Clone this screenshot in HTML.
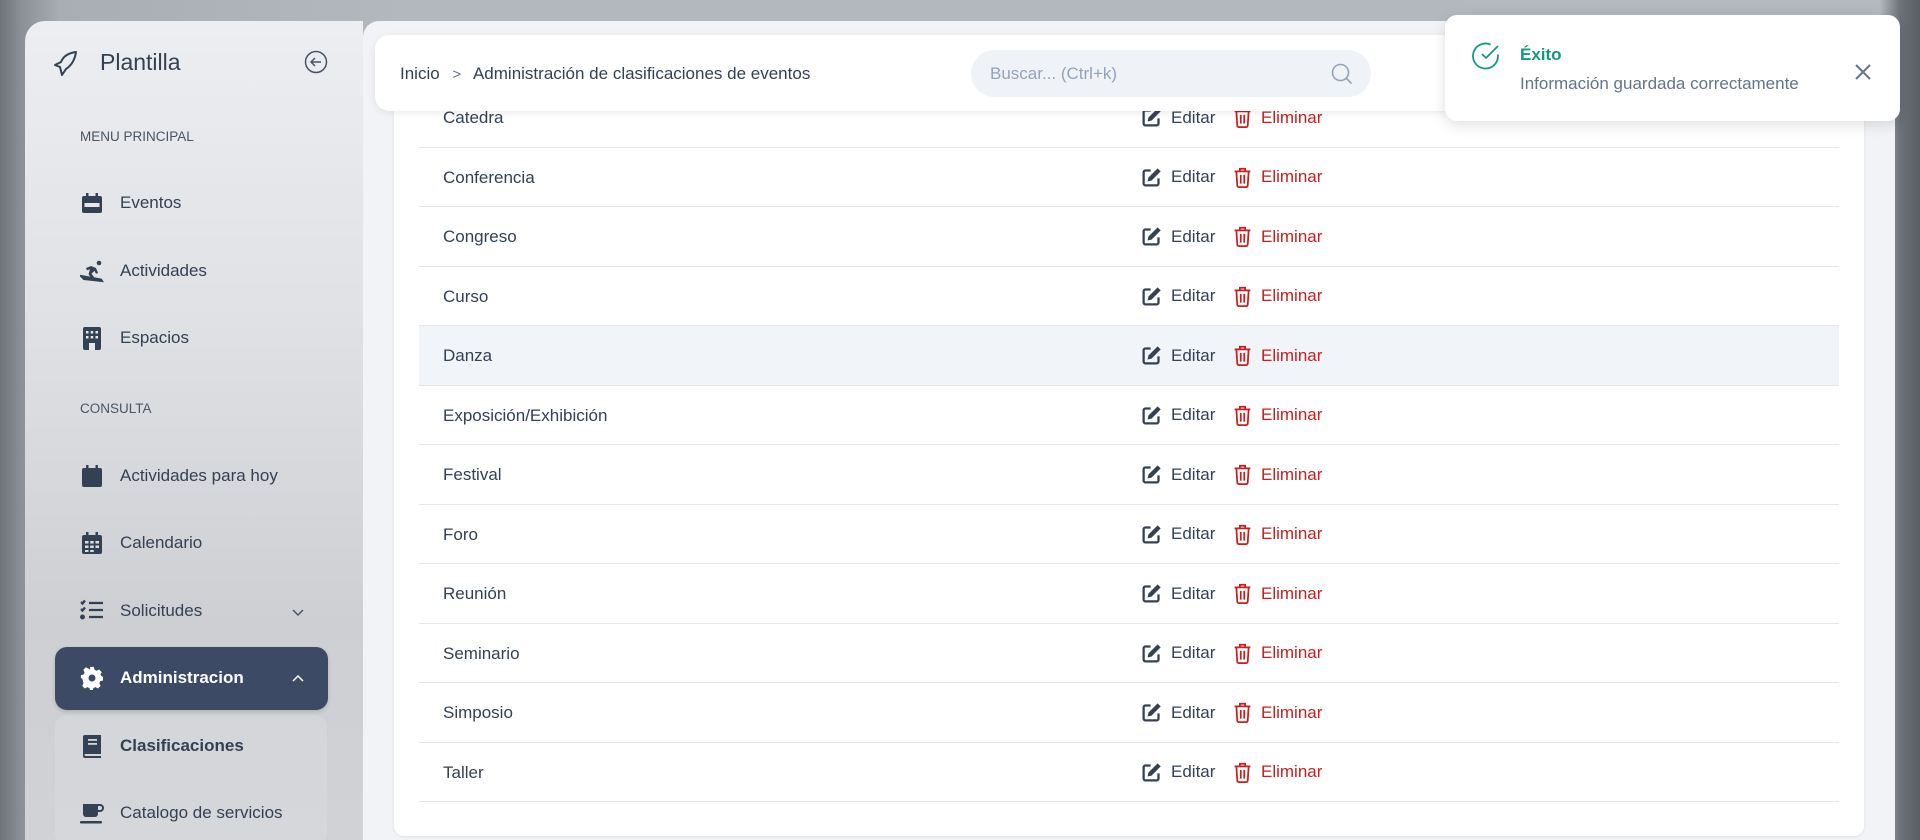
<!DOCTYPE html>
<html><head><meta charset="utf-8"><style>
*{box-sizing:border-box;margin:0;padding:0}
html{width:1920px;height:840px;overflow:hidden}
body{width:1920px;height:840px;overflow:hidden;font-family:"Liberation Sans",sans-serif;position:relative;
background:linear-gradient(90deg,#6f737a 0,#8a8e95 20px,#a9adb4 60px,#b3b7be 400px,#b3b7be 1880px,#6d7178 1900px,#5a5e65 1920px);}
.side{position:absolute;left:25px;top:21px;width:338px;height:819px;border-radius:20px 0 0 0;
background:linear-gradient(180deg,#eceef1 0,#dfe1e5 300px,#cdcfd3 600px,#d0d2d6 819px);}
.main{position:absolute;left:363px;top:21px;width:1532px;height:819px;background:#f1f3f6;border-radius:16px 0 0 0}
.card{position:absolute;left:394px;top:60px;width:1470px;height:776px;background:#fff;border-radius:10px;box-shadow:0 1px 3px rgba(0,0,0,.08)}
.hdr{position:absolute;left:375px;top:35px;width:1200px;height:76px;background:#fff;border-radius:14px;box-shadow:0 2px 8px rgba(0,0,0,.08)}
.crumb{position:absolute;left:400px;top:64px;font-size:17px;color:#334155}
.search{position:absolute;left:971px;top:50px;width:400px;height:47px;border-radius:24px;background:#eff2f7}
.search span{position:absolute;left:19px;top:14px;font-size:17px;color:#94a3b8}
.row{position:absolute;left:419px;width:1420px;height:59.5px;border-bottom:1.5px solid #e4e6ea}
.row .n{position:absolute;left:24px;top:20px;font-size:17px;color:#334155}
.row .e{position:absolute;left:722px;top:19px;font-size:17px;color:#334155;display:flex;align-items:center}
.row .d{position:absolute;left:814px;top:19px;font-size:17px;color:#c81e1e;display:flex;align-items:center}
.row svg{margin-right:9px}
.hl{background:#f1f4f8}
.si{position:absolute;left:80px;font-size:17px;color:#334155;display:flex;align-items:center}
.si svg{width:24px;height:24px;margin-right:16px}
.lab{position:absolute;left:80px;font-size:13.5px;color:#4b5563}
.toast{position:absolute;left:1445px;top:15px;width:455px;height:106px;background:#fff;border-radius:12px;box-shadow:0 4px 14px rgba(0,0,0,.12)}
</style></head><body>
<div class="side"></div>
<svg style="position:absolute;left:53px;top:50px" width="26" height="28" viewBox="0 0 26 28" fill="none" stroke="#334155" stroke-width="2" stroke-linejoin="round"><path d="M23 2 C15 3 10 7 8 12 L2 15 L7 17 L9 25 L13 19 C19 15 22 9 23 2Z"/></svg>
<div style="position:absolute;left:100px;top:49px;font-size:23px;color:#334155">Plantilla</div>
<svg style="position:absolute;left:304px;top:50px" width="24" height="24" viewBox="0 0 24 24" fill="none" stroke="#475569" stroke-width="1.5"><circle cx="12" cy="12" r="10.5"/><path d="M17 12H7M11 8l-4 4 4 4"/></svg>
<div class="lab" style="top:129px">MENU PRINCIPAL</div>
<div class="si" style="top:191px"><svg viewBox="0 0 24 24" fill="#334155"><rect x="2" y="5" width="20" height="17" rx="2"/><rect x="6" y="2" width="2.5" height="5"/><rect x="15.5" y="2" width="2.5" height="5"/><rect x="4.5" y="12" width="15" height="4" fill="#e5e7eb"/></svg>Eventos</div>
<div class="si" style="top:259px"><svg viewBox="0 0 24 24" fill="#334155"><circle cx="19" cy="4" r="2.3"/><path d="M6 9l5-2 5 2 2 5-2 .8-1.5-3-3 3 3 4-2 1.5-4-5 1.5-5-3 1z"/><path d="M1 17l3 3 18 2-1-1.5z" stroke="#334155" stroke-width="2"/></svg>Actividades</div>
<div class="si" style="top:326px"><svg viewBox="0 0 24 24" fill="#334155"><rect x="3" y="1" width="18" height="23" rx="2"/><g fill="#e5e7eb"><rect x="6" y="5" width="2.5" height="2.5"/><rect x="10.7" y="5" width="2.5" height="2.5"/><rect x="15.5" y="5" width="2.5" height="2.5"/><rect x="6" y="10" width="2.5" height="2.5"/><rect x="10.7" y="10" width="2.5" height="2.5"/><rect x="15.5" y="10" width="2.5" height="2.5"/><rect x="9" y="17" width="6" height="7"/></g></svg>Espacios</div>
<div class="lab" style="top:401px">CONSULTA</div>
<div class="si" style="top:464px"><svg viewBox="0 0 24 24" fill="#334155"><rect x="2" y="4" width="20" height="19" rx="2"/><rect x="6" y="1" width="2.5" height="5"/><rect x="15.5" y="1" width="2.5" height="5"/></svg>Actividades para hoy</div>
<div class="si" style="top:531px"><svg viewBox="0 0 24 24" fill="#334155"><rect x="2" y="4" width="20" height="19" rx="2"/><rect x="6" y="1" width="2.5" height="5"/><rect x="15.5" y="1" width="2.5" height="5"/><g fill="#dcdee2"><rect x="5" y="10" width="3.5" height="2.5"/><rect x="10.2" y="10" width="3.5" height="2.5"/><rect x="15.5" y="10" width="3.5" height="2.5"/><rect x="5" y="14.5" width="3.5" height="2.5"/><rect x="10.2" y="14.5" width="3.5" height="2.5"/><rect x="15.5" y="14.5" width="3.5" height="2.5"/><rect x="5" y="19" width="3.5" height="2"/><rect x="10.2" y="19" width="3.5" height="2"/></g></svg>Calendario</div>
<div class="si" style="top:599px"><svg viewBox="0 0 24 24" fill="none" stroke="#334155" stroke-width="2.3"><path d="M1 3l1.5 1.5L5 1.5M1 10l1.5 1.5L5 8.5M9 4h14M9 11h14M9 18h14"/><circle cx="2.5" cy="18" r="1.3" fill="#334155"/></svg>Solicitudes</div>
<svg style="position:absolute;left:291px;top:607px" width="14" height="10" viewBox="0 0 14 10" fill="none" stroke="#475569" stroke-width="1.5"><path d="M2 3l5 5 5-5"/></svg>
<div style="position:absolute;left:55px;top:715px;width:272px;height:130px;background:rgba(255,255,255,.12);border-radius:12px"></div>
<div style="position:absolute;left:55px;top:647px;width:273px;height:63px;background:#3c4a66;border-radius:12px;box-shadow:0 2px 4px rgba(0,0,0,.15)"></div>
<div class="si" style="top:666px;color:#fff;font-weight:bold"><svg viewBox="0 0 24 24" fill="#fff"><path d="M10 1h4l.7 3 2.3 1.2 2.8-1.4 2.8 2.8-1.4 2.8L22.4 11l1.6.8v4l-3 .7-1 2.3 1.4 2.8-2.8 2.8-2.8-1.4-2.3 1-.8 3H10l-.7-3-2.3-1-2.8 1.4-2.8-2.8 1.4-2.8L1.6 14 0 13v-3l3-.7 1-2.3-1.4-2.8 2.8-2.8 2.8 1.4L10 4z" transform="scale(.92) translate(1,0)"/><circle cx="12" cy="12" r="3.5" fill="#3c4a66"/></svg>Administracion</div>
<svg style="position:absolute;left:291px;top:674px" width="14" height="10" viewBox="0 0 14 10" fill="none" stroke="#fff" stroke-width="1.5"><path d="M2 7l5-5 5 5"/></svg>
<div class="si" style="top:734px;font-weight:bold"><svg viewBox="0 0 24 24" fill="#334155"><path d="M3 3a2 2 0 012-2h16v19H5.5a1 1 0 000 2H21v2H5a2 2 0 01-2-2z"/><rect x="8" y="5" width="9" height="1.8" fill="#d4d6da"/><rect x="8" y="9" width="9" height="1.8" fill="#d4d6da"/></svg>Clasificaciones</div>
<div class="si" style="top:801px"><svg viewBox="0 0 24 24" fill="#334155"><path d="M3 3h15v10a3 3 0 01-3 3H6a3 3 0 01-3-3z"/><path d="M18 4h2a3 3 0 010 6h-2" fill="none" stroke="#334155" stroke-width="2"/><rect x="0" y="20" width="22" height="2.5" rx="1"/></svg>Catalogo de servicios</div>

<div class="main"></div>
<div class="card"></div>
<div class="row" style="top:88px"><span class="n">Catedra</span></div>
<div class="row" style="top:147.5px"><span class="n">Conferencia</span></div>
<div class="row" style="top:207px"><span class="n">Congreso</span></div>
<div class="row" style="top:266.5px"><span class="n">Curso</span></div>
<div class="row hl" style="top:326px"><span class="n">Danza</span></div>
<div class="row" style="top:385.5px"><span class="n">Exposición/Exhibición</span></div>
<div class="row" style="top:445px"><span class="n">Festival</span></div>
<div class="row" style="top:504.5px"><span class="n">Foro</span></div>
<div class="row" style="top:564px"><span class="n">Reunión</span></div>
<div class="row" style="top:623.5px"><span class="n">Seminario</span></div>
<div class="row" style="top:683px"><span class="n">Simposio</span></div>
<div class="row" style="top:742.5px"><span class="n">Taller</span></div>
<script>
document.querySelectorAll('.row').forEach(function(r){
r.insertAdjacentHTML('beforeend','<span class="e"><svg width="21" height="21" viewBox="0 0 24 24"><path d="M11 4H5a2 2 0 00-2 2v13a2 2 0 002 2h13a2 2 0 002-2v-6" fill="none" stroke="#334155" stroke-width="2.6"/><path d="M19 1.5l3.5 3.5L12 15.5l-4.5 1 1-4.5z" fill="#334155"/></svg>Editar</span><span class="d"><svg width="19" height="21" viewBox="0 0 20 24" fill="none" stroke="#c81e1e" stroke-width="2"><path d="M1 5h18M7 5V2h6v3M3 5l1 16a2 2 0 002 2h8a2 2 0 002-2l1-16M8 9v10M12 9v10"/></svg>Eliminar</span>');});
</script>
<div class="hdr"></div>
<div class="crumb">Inicio <span style="color:#64748b;font-size:15px;margin:0 8px">&gt;</span> Administración de clasificaciones de eventos</div>
<div class="search"><span>Buscar... (Ctrl+k)</span><svg style="position:absolute;right:18px;top:13px" width="22" height="22" viewBox="0 0 22 22" fill="none" stroke="#94a3b8" stroke-width="1.6"><circle cx="9.5" cy="9.5" r="8"/><path d="M15.5 15.5l5 5"/></svg></div>
<div class="toast">
<svg style="position:absolute;left:26px;top:26px" width="30" height="30" viewBox="0 0 30 30" fill="none" stroke="#129a7f" stroke-width="1.8"><path d="M27 13.5v1.5a12.5 12.5 0 11-7.4-11.4"/><path d="M27 5L15 17l-4-4"/></svg>
<div style="position:absolute;left:75px;top:30px;font-size:17px;font-weight:bold;color:#129a7f">Éxito</div>
<div style="position:absolute;left:75px;top:59px;font-size:17px;color:#64748b">Información guardada correctamente</div>
<svg style="position:absolute;left:408px;top:47px" width="20" height="20" viewBox="0 0 20 20" stroke="#64748b" stroke-width="2"><path d="M3 3l14 14M17 3L3 17"/></svg>
</div>
</body></html>
